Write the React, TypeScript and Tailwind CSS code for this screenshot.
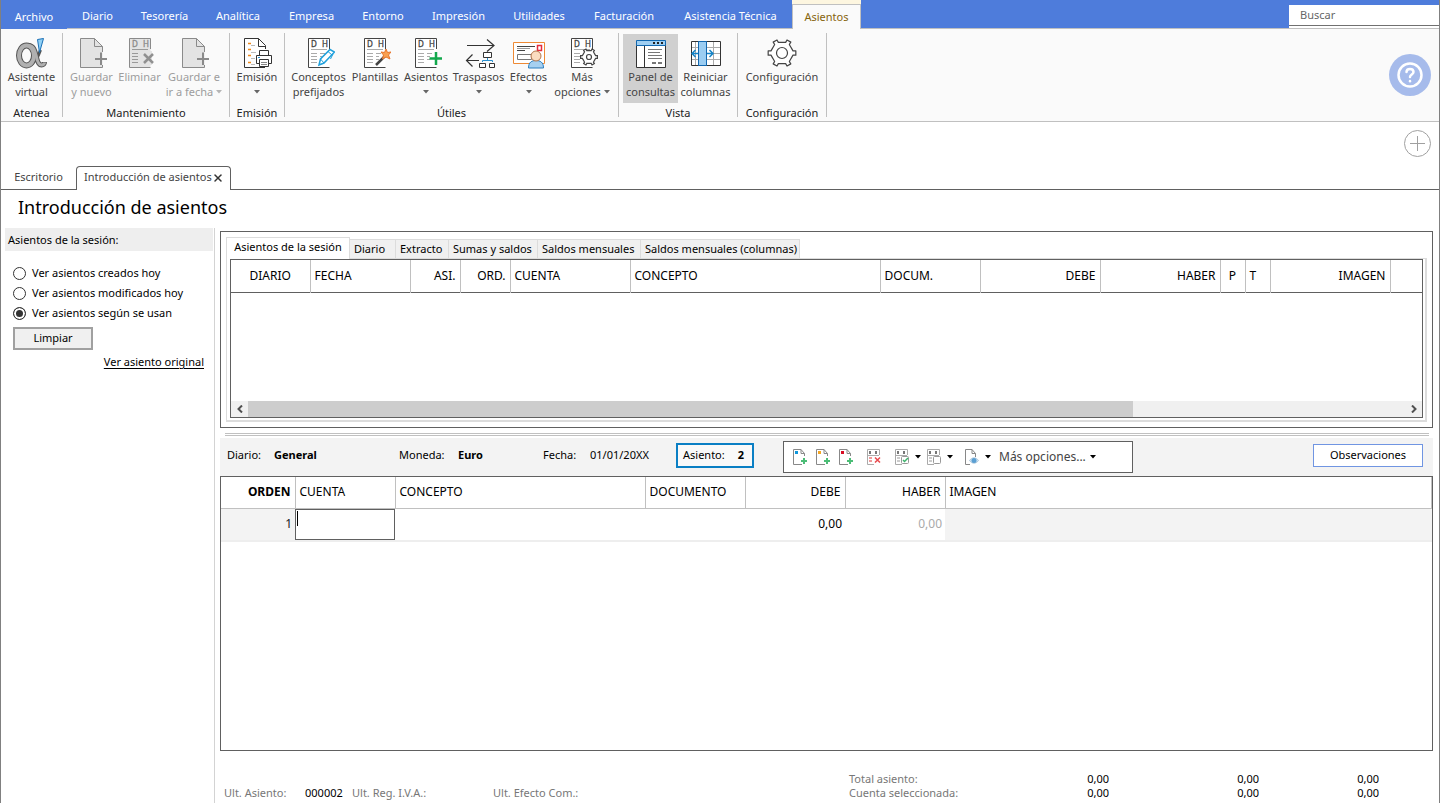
import React, { useState } from 'react';
import { X } from 'lucide-react';

const MENU = [
  { label: 'Diario', width: 'w-[61px]' },
  { label: 'Tesorería', width: 'w-[73px]' },
  { label: 'Analítica', width: 'w-[74px]' },
  { label: 'Empresa', width: 'w-[73px]' },
  { label: 'Entorno', width: 'w-[70px]' },
  { label: 'Impresión', width: 'w-[81px]' },
  { label: 'Utilidades', width: 'w-[80px]' },
  { label: 'Facturación', width: 'w-[90px]' },
  { label: 'Asistencia Técnica', width: 'w-[123px]' },
];

const QUERY_TABS = [
  { label: 'Diario', width: 'w-[46px]' },
  { label: 'Extracto', width: 'w-[53px]' },
  { label: 'Sumas y saldos', width: 'w-[89px]' },
  { label: 'Saldos mensuales', width: 'w-[103px]' },
  { label: 'Saldos mensuales (columnas)', width: 'w-[159px]' },
];

const SESSION_COLUMNS = [
  { label: 'DIARIO', className: 'w-[79px] text-center' },
  { label: 'FECHA', className: 'w-[100px] text-left' },
  { label: 'ASI.', className: 'w-[50px] text-right' },
  { label: 'ORD.', className: 'w-[50px] text-right' },
  { label: 'CUENTA', className: 'w-[120px] text-left' },
  { label: 'CONCEPTO', className: 'w-[250px] text-left' },
  { label: 'DOCUM.', className: 'w-[100px] text-left' },
  { label: 'DEBE', className: 'w-[120px] text-right' },
  { label: 'HABER', className: 'w-[120px] text-right' },
  { label: 'P', className: 'w-[25px] text-center' },
  { label: 'T', className: 'w-[25px] text-left' },
  { label: 'IMAGEN', className: 'w-[120px] text-right' },
  { label: '', className: '' },
];

const ENTRY_COLUMNS = [
  { label: 'ORDEN', className: 'w-[74px] text-right font-bold' },
  { label: 'CUENTA', className: 'w-[100px] text-left font-normal' },
  { label: 'CONCEPTO', className: 'w-[250px] text-left font-normal' },
  { label: 'DOCUMENTO', className: 'w-[100px] text-left font-normal' },
  { label: 'DEBE', className: 'w-[100px] text-right font-normal' },
  { label: 'HABER', className: 'w-[100px] text-right font-normal' },
  { label: 'IMAGEN', className: 'text-left font-normal' },
];

const SESSION_FILTERS = [
  'Ver asientos creados hoy',
  'Ver asientos modificados hoy',
  'Ver asientos según se usan',
];

type IconProps = { children: React.ReactNode };

const Icon: React.FC<IconProps> = ({ children }) => (
  <svg width="32" height="32" viewBox="0 0 32 32" fill="none" className="shrink-0" aria-hidden="true">
    {children}
  </svg>
);

const Caret: React.FC<{ className?: string }> = ({ className = 'text-[#666]' }) => (
  <svg width="6" height="4" viewBox="0 0 6 4" className={`inline-block shrink-0 ${className}`} aria-hidden="true">
    <path d="M0 0H6L3 3.5Z" fill="currentColor" />
  </svg>
);

// Six-toothed gear outline centred on cx, cy
const gearPoints = (cx: number, cy: number, r: number) => {
  const shape = [[-24, 0.76], [-11, 0.8], [-9, 1], [9, 1], [11, 0.8], [24, 0.76]];
  const points: string[] = [];
  for (let tooth = 0; tooth < 6; tooth++) {
    shape.forEach(([deg, k]) => {
      const a = ((tooth * 60 + deg) * Math.PI) / 180;
      points.push(`${(cx + r * k * Math.cos(a)).toFixed(2)},${(cy + r * k * Math.sin(a)).toFixed(2)}`);
    });
  }
  return points.join(' ');
};

// Atenea logo: a looped ribbon with a blue pen tip as its upper arm
const AteneaIcon = () => (
  <Icon>
    <ellipse cx="10.500" cy="18.500" rx="7.500" ry="10" stroke="#555" strokeWidth="6" />
    <path d="M13 8.500C18 9 19 14 20.500 20C21.500 25 23 28 25.500 28C27.500 28 28.500 26.500 28.500 25" stroke="#555" strokeWidth="5" />
    <path d="M24.500 13C22.500 19 19 25 14 28" stroke="#555" strokeWidth="3" />
    <ellipse cx="10.500" cy="18.500" rx="7.500" ry="10" stroke="#b0b0b0" strokeWidth="4" />
    <path d="M13 8.500C18 9 19 14 20.500 20C21.500 25 23 28 25.500 28C27.500 28 28.500 26.500 28.500 25.500" stroke="#b0b0b0" strokeWidth="3" />
    <path d="M21.500 2.500L27.500 1.500L23.500 15.500Z" fill="#8fd0f5" stroke="#1a6fb5" />
  </Icon>
);

const NewDocIcon = () => (
  <Icon>
    <path d="M4.500 1.500H18.500L26.500 9.500V30.500H4.500Z" fill="#e3e3e3" />
    <path d="M26.500 15V9.500L18.500 1.500H4.500V30.500H26.500V28M18.500 1.500V9.500H26.500" stroke="#8a8a8a" />
    <path d="M25 15.500V28M19 22H31" stroke="#8a8a8a" strokeWidth="2" />
  </Icon>
);

const LedgerBase: React.FC<{ muted?: boolean }> = ({ muted }) => {
  const ink = muted ? '#8a8a8a' : '#444';
  return (
    <>
      <path d="M5.500 1.500H26.500V30.500H5.500Z" fill={muted ? '#e3e3e3' : '#fff'} />
      <path d="M26.500 12V1.500H5.500V30.500H26.500" stroke={ink} />
      <text x="8" y="10" fontFamily="Noto Sans" fontSize="8" fill={ink} stroke={ink} strokeWidth="0.300">D</text>
      <text x="19" y="10" fontFamily="Noto Sans" fontSize="8" fill={ink} stroke={ink} strokeWidth="0.300">H</text>
      <path d="M8 12.500H24M8 16.500H14M8 19.500H14M8 22.500H14M8 25.500H14M17 16.500H22M17 19.500H20M17 22.500H20" stroke={muted ? '#999' : '#aaa'} />
    </>
  );
};

const DeleteIcon = () => (
  <Icon>
    <LedgerBase muted />
    <path d="M16 14H28V28H16Z" fill="#e3e3e3" />
    <path d="M20 17L29 26M29 17L20 26" stroke="#909090" strokeWidth="2.500" />
  </Icon>
);

const PrintIcon = () => (
  <Icon>
    <path d="M24.500 12V8.500L17.500 1.500H3.500V30.500H24" fill="#fff" stroke="#333" />
    <path d="M17.500 1.500V9.500H24.500" stroke="#333" />
    <path d="M7 6.500H10M7 12.500H10M7 18.500H10M7 25.500H10" stroke="#f08a1c" strokeWidth="1.500" />
    <path d="M10 8.500H14M10 15.500H15M10 21.500H14M10 27.500H14" stroke="#bbb" />
    <path d="M18.500 13.500H27.500V19H18.500Z" fill="#fff" stroke="#333" />
    <path d="M15.500 18.500H30.500V26.500H15.500Z" fill="#fff" stroke="#333" />
    <path d="M18.500 22.500H27.500V29.500H18.500Z" fill="#fff" stroke="#333" />
    <path d="M20 25.500H26M20 27.500H26" stroke="#888" />
    <path d="M17 20.500H19" stroke="#2790d0" />
  </Icon>
);

const PenIcon = () => (
  <Icon>
    <LedgerBase />
    <path d="M16 28L17.500 22L27 12.500L31.500 15L21 26Z" fill="#fff" stroke="#1fa0dc" strokeWidth="1.500" />
    <path d="M25 14.500L29 18M17.500 22L21 26M30 17L27.500 22" stroke="#1fa0dc" />
  </Icon>
);

const WandIcon = () => (
  <Icon>
    <LedgerBase />
    <path d="M17 28L26 19" stroke="#444" strokeWidth="2.500" />
    <path d="M27 12L28.500 15.500L32 15L29.500 18L31 22L27 20L23.500 22L24.500 18L22 15L25.500 15.500Z" fill="#f9a050" stroke="#e8762c" />
  </Icon>
);

const AddEntryIcon = () => (
  <Icon>
    <LedgerBase />
    <path d="M26 15V28M19.500 21.500H32" stroke="#12a84c" strokeWidth="2.500" />
  </Icon>
);

const TransferIcon = () => (
  <Icon>
    <path d="M4 8.500H31M24 2.500L31 8.500L24 14.500" stroke="#333" strokeWidth="1.200" />
    <path d="M3.500 23.500H16M9.500 17.500L3.500 23.500L9.500 29.500" stroke="#333" strokeWidth="1.200" />
    <path d="M20.500 15.500H28.500V20.500H20.500Z" fill="#fff" stroke="#333" />
    <path d="M24.500 21V23.500M19.500 25V23.500H29.500V25" stroke="#2790d0" />
    <path d="M16.500 26.500H22.500V30.500H16.500ZM26.500 26.500H31.500V30.500H26.500Z" fill="#fff" stroke="#333" />
  </Icon>
);

const EffectsIcon = () => (
  <Icon>
    <path d="M0.500 5.500H31.500V26.500H0.500Z" fill="#fff" stroke="#ee8a35" />
    <path d="M4 9.500H22M4 13.500H12" stroke="#444" />
    <path d="M4 11.500H17" stroke="#999" />
    <path d="M4.500 17.500H18.500V22.500H4.500Z" stroke="#777" />
    <path d="M24.500 8.500H28.500V13.500H24.500Z" stroke="#e52d3c" strokeWidth="1.500" />
    <path d="M15.500 31C15.500 25 19 23.500 23 23.500S30.500 25 30.500 31Z" fill="#a6d0f0" stroke="#2c7fc0" />
    <circle cx="23" cy="19" r="5" fill="#fadcc0" stroke="#b5754a" />
  </Icon>
);

const MoreIcon = () => (
  <Icon>
    <LedgerBase />
    <polygon points={gearPoints(23, 20, 8.5)} fill="#fff" stroke="#444" strokeWidth="1.200" />
    <circle cx="23" cy="20" r="2.500" fill="#fff" stroke="#444" strokeWidth="1.200" />
  </Icon>
);

const PanelIcon = () => (
  <Icon>
    <path d="M1.500 4.500H30.500V30.500H1.500Z" fill="#fff" stroke="#333" />
    <path d="M1.500 3.500H30.500V8.500H1.500Z" fill="#9fcff2" stroke="#1268b0" />
    <path d="M18 6H20M22 6H24M26 6H28" stroke="#222" strokeWidth="2" />
    <path d="M9.500 9V30" stroke="#333" />
    <path d="M13 12.500H27M13 15.500H25M13 18.500H27M13 21.500H27" stroke="#777" />
    <path d="M17 26H21M23 26H27" stroke="#777" strokeWidth="2" />
  </Icon>
);

const ColumnsIcon = () => (
  <Icon>
    <path d="M1.500 4.500H30.500V28.500H1.500Z" fill="#fff" />
    <path d="M2 10.500H30M2 16.500H30M2 22.500H30M5.500 5V28M23.500 5V28" stroke="#aaa" />
    <path d="M1.500 4.500H30.500V28.500H1.500Z" stroke="#333" />
    <path d="M8.500 4.500H16.500V28.500H8.500Z" fill="#9bcdf2" stroke="#1268b0" />
    <path d="M8 16.500H2.500M5.500 13L2 16.500L5.500 20M17 16.500H22.500M19.500 13L23 16.500L19.500 20" stroke="#1583c6" strokeWidth="1.500" />
  </Icon>
);

const GearIcon = () => (
  <Icon>
    <polygon points={gearPoints(16, 16, 14)} fill="#fff" stroke="#444" strokeWidth="1.200" strokeLinejoin="round" />
    <circle cx="16" cy="16" r="5.500" stroke="#444" strokeWidth="1.200" />
  </Icon>
);

type RibbonButtonProps = {
  icon: React.ReactNode;
  lines: string[];
  width: string;
  caret?: boolean;
  disabled?: boolean;
  pressed?: boolean;
};

const RibbonButton: React.FC<RibbonButtonProps> = ({ icon, lines, width, caret, disabled, pressed }) => (
  <button
    disabled={disabled}
    aria-pressed={pressed}
    className={`flex h-[69px] flex-col items-center whitespace-nowrap pt-[3px] leading-[15px] ${width} ${
      disabled ? 'text-[#9d9d9d]' : 'text-[#444]'
    } ${pressed ? 'bg-[#d0d0d0]' : ''}`}
  >
    {icon}
    <span>{lines[0]}</span>
    <span className="flex items-center gap-[3px]">
      {lines[1]}
      {caret && (
        <span className="flex h-[15px] items-center">
          <Caret className={disabled ? 'text-[#b5b5b5]' : 'text-[#666]'} />
        </span>
      )}
    </span>
  </button>
);

type RibbonGroupProps = { title: string; width: string; children: React.ReactNode };

const RibbonGroup: React.FC<RibbonGroupProps> = ({ title, width, children }) => (
  <section className={`my-1 flex h-[84px] shrink-0 flex-col border-r border-[#c0c0c0] ${width}`}>
    <div className="flex justify-center pt-px">{children}</div>
    <h2 className="pt-[2px] text-center leading-[15px] text-[#222]">{title}</h2>
  </section>
);

const Ribbon = () => (
  <div className="flex items-start border-b border-[#c0c0c0] bg-[#fafafa]">
    <RibbonGroup title="Atenea" width="w-[62px]">
      <RibbonButton icon={<AteneaIcon />} lines={['Asistente', 'virtual']} width="w-[58px]" />
    </RibbonGroup>
    <RibbonGroup title="Mantenimiento" width="w-[167px]">
      <RibbonButton icon={<NewDocIcon />} lines={['Guardar', 'y nuevo']} width="w-[52px]" disabled />
      <RibbonButton icon={<DeleteIcon />} lines={['Eliminar']} width="w-11" disabled />
      <RibbonButton icon={<NewDocIcon />} lines={['Guardar e', 'ir a fecha']} width="w-[65px]" caret disabled />
    </RibbonGroup>
    <RibbonGroup title="Emisión" width="w-[55px]">
      <RibbonButton icon={<PrintIcon />} lines={['Emisión']} width="w-[50px]" caret />
    </RibbonGroup>
    <RibbonGroup title="Útiles" width="w-[334px]">
      <RibbonButton icon={<PenIcon />} lines={['Conceptos', 'prefijados']} width="w-[59px]" />
      <RibbonButton icon={<WandIcon />} lines={['Plantillas']} width="w-[54px]" />
      <RibbonButton icon={<AddEntryIcon />} lines={['Asientos']} width="w-12" caret />
      <RibbonButton icon={<TransferIcon />} lines={['Traspasos']} width="w-[57px]" caret />
      <RibbonButton icon={<EffectsIcon />} lines={['Efectos']} width="w-[43px]" caret />
      <RibbonButton icon={<MoreIcon />} lines={['Más', 'opciones']} width="w-16" caret />
    </RibbonGroup>
    <RibbonGroup title="Vista" width="w-[119px]">
      <RibbonButton icon={<PanelIcon />} lines={['Panel de', 'consultas']} width="w-[55px]" pressed />
      <RibbonButton icon={<ColumnsIcon />} lines={['Reiniciar', 'columnas']} width="w-[55px]" />
    </RibbonGroup>
    <RibbonGroup title="Configuración" width="w-[89px]">
      <RibbonButton icon={<GearIcon />} lines={['Configuración']} width="w-20" />
    </RibbonGroup>
    <button aria-label="Ayuda" className="mr-2 ml-auto flex size-[42px] shrink-0 items-center justify-center self-center rounded-full bg-[#a6bbeb]">
      <svg width="26" height="26" viewBox="0 0 26 26" fill="none" stroke="#fff" strokeLinecap="round" aria-hidden="true">
        <circle cx="13" cy="13" r="11.500" strokeWidth="2.500" />
        <path d="M9.500 10C9.500 8 11 7 13 7S16.500 8 16.500 10C16.500 12.500 13 12.500 13 15" strokeWidth="2.500" />
        <path d="M13 19V19.200" strokeWidth="2.500" />
      </svg>
    </button>
  </div>
);

const MenuBar = () => (
  <header className="flex h-[29px] border-b border-[#c0c0c0] bg-[#4e7cdb] text-white">
    <nav className="flex items-end">
      <button className="-mb-px h-6 w-[66px] bg-[#4e7cdb]">Archivo</button>
      {MENU.map((item) => (
        <button key={item.label} className={`h-[23px] whitespace-nowrap ${item.width}`}>
          {item.label}
        </button>
      ))}
      <div className="-mb-px flex h-[29px] w-[69px] flex-col bg-[#fdf6e0] pt-1">
        <button className="flex-1 border-x border-t border-[#c0c0c0] bg-[#fafafa] text-[#86640c]" aria-current="page">
          Asientos
        </button>
      </div>
    </nav>
    <div className="mt-[5px] ml-auto bg-white pb-[2px]">
      <input
        type="search"
        aria-label="Buscar"
        placeholder="Buscar"
        className="block h-[21px] w-[150px] border-b border-[#707070] bg-white px-[11px] pb-[2px] text-black outline-none placeholder:text-[#666]"
      />
    </div>
  </header>
);

const DocumentTabs = () => (
  <div className="flex h-[68px] flex-col justify-between">
    <button aria-label="Nueva pestaña" className="mt-2 mr-2 self-end">
      <svg width="27" height="27" viewBox="0 0 27 27" fill="none" stroke="#a0a0a0" aria-hidden="true">
        <circle cx="13.500" cy="13.500" r="13" />
        <path d="M13.500 6V21M6 13.500H21" />
      </svg>
    </button>
    <div className="flex items-end text-[#444]">
      <button className="h-6 w-[75px] border-b border-[#606060]">Escritorio</button>
      <div className="flex h-6 w-[155px] items-center justify-between rounded-t border-x border-t border-[#606060] pr-2 pb-[2px] pl-[7px]">
        <button className="whitespace-nowrap">Introducción de asientos</button>
        <button aria-label="Cerrar">
          <X size={12} strokeWidth={3} className="text-[#333]" />
        </button>
      </div>
      <div className="h-6 flex-1 border-b border-[#606060]" />
    </div>
  </div>
);

const SessionPanel = () => {
  const [filter, setFilter] = useState(SESSION_FILTERS[2]);

  return (
    <aside className="w-[214px] shrink-0 border-r border-[#d3d3d3]">
      <h2 className="mr-px ml-1 bg-[#eee] px-[3px] leading-[23px]">Asientos de la sesión:</h2>
      <div className="mt-3 ml-3">
        {SESSION_FILTERS.map((option) => (
          <label key={option} className="flex h-5 items-center gap-[6px]">
            <input
              type="radio"
              name="session-filter"
              checked={filter === option}
              onChange={() => setFilter(option)}
              className="size-[13px] appearance-none rounded-full border border-[#333] bg-white checked:bg-[#333] checked:shadow-[inset_0_0_0_2px_#fff]"
            />
            {option}
          </label>
        ))}
        <button className="mt-1 block h-[23px] w-20 border-2 border-[#a0a0a0] bg-[#f0f0f0]">Limpiar</button>
      </div>
      <div className="mt-1 mr-[10px] text-right leading-4">
        <a href="#original" className="underline underline-offset-2">Ver asiento original</a>
      </div>
    </aside>
  );
};

const QueryPanel = () => (
  <section className="h-[197px] border border-[#606060] p-[5px]">
    <div className="flex items-end">
      <button className="z-10 -mb-px h-[22px] w-[124px] border-x border-t border-[#dcdcdc] bg-white pb-[2px] whitespace-nowrap">
        Asientos de la sesión
      </button>
      {QUERY_TABS.map((tab) => (
        <button
          key={tab.label}
          className={`h-[19px] border-t border-r border-[#dcdcdc] bg-[#f0f0f0] pl-1 text-left whitespace-nowrap ${tab.width}`}
        >
          {tab.label}
        </button>
      ))}
    </div>
    <div className="border border-r-2 border-b-2 border-[#dcdcdc] pr-[2px] pb-[2px] pl-[3px]">
      <div className="flex h-[159px] flex-col justify-between border border-[#606060]">
        <div className="overflow-hidden">
          <table className="w-full table-fixed border-collapse text-[12px]">
            <thead>
              <tr className="h-8 border-b border-[#606060]">
                {SESSION_COLUMNS.map((col, i) => (
                  <th key={i} className={`border-r border-r-[#c0c0c0] px-1 font-normal last:border-r-0 ${col.className}`}>
                    {col.label}
                  </th>
                ))}
              </tr>
            </thead>
          </table>
        </div>
        <div className="flex h-4 items-center bg-[#f0f0f0]">
          <button aria-label="Desplazar a la izquierda" className="flex h-full w-[17px] items-center justify-center">
            <svg width="6" height="8" viewBox="0 0 6 8" fill="none" stroke="#505050" strokeWidth="2" aria-hidden="true">
              <path d="M5 0.500L1.500 4L5 7.500" />
            </svg>
          </button>
          <div className="flex h-full flex-1">
            <div className="h-full grow-[13] bg-[#cdcdcd]" />
            <div className="h-full grow-[4]" />
          </div>
          <button aria-label="Desplazar a la derecha" className="flex h-full w-[17px] items-center justify-center">
            <svg width="6" height="8" viewBox="0 0 6 8" fill="none" stroke="#505050" strokeWidth="2" aria-hidden="true">
              <path d="M1 0.500L4.500 4L1 7.500" />
            </svg>
          </button>
        </div>
      </div>
    </div>
  </section>
);

const SmallIcon: React.FC<IconProps> = ({ children }) => (
  <svg width="16" height="16" viewBox="0 0 16 16" fill="none" aria-hidden="true">
    {children}
  </svg>
);

const NewEntryIcon: React.FC<{ color: string }> = ({ color }) => (
  <SmallIcon>
    <path d="M11.500 7V4.500L8 0.500H0.500V15.500H9M8 0.500V4.500H11.500" stroke="#888" />
    <rect x="2" y="2" width="3" height="3" fill={color} />
    <path d="M11 9V15M8 12H14" stroke="#4bbd76" strokeWidth="2" />
  </SmallIcon>
);

const SmallLedger: React.FC<{ dots: string }> = ({ dots }) => (
  <>
    <path d="M12.500 6V0.500H0.500V15.500H7M1 6.500H12" stroke="#aaa" />
    <path d="M3 2V5M9 2V5" stroke="#777" strokeWidth="2" />
    <path d="M2 9H5M2 12H5" stroke={dots} strokeWidth="2" />
  </>
);

const EntryToolbar = () => (
  <div className="flex h-8 w-[350px] shrink-0 items-center border border-[#606060] bg-white pl-[9px]">
    <div className="flex gap-[7px]">
      <button aria-label="Nuevo asiento"><NewEntryIcon color="#0e97dc" /></button>
      <button aria-label="Nueva plantilla"><NewEntryIcon color="#f5a623" /></button>
      <button aria-label="Nuevo registro"><NewEntryIcon color="#d80c24" /></button>
    </div>
    <button aria-label="Borrar apunte" className="ml-3">
      <SmallIcon>
        <SmallLedger dots="#f09a9a" />
        <path d="M8 8.500L13 13.500M13 8.500L8 13.500" stroke="#e8484c" strokeWidth="1.500" />
      </SmallIcon>
    </button>
    <button aria-label="Puntear" className="ml-3 flex items-center gap-1">
      <SmallIcon>
        <SmallLedger dots="#ccc" />
        <rect x="6.500" y="7.500" width="7" height="7" rx="1" fill="#fff" stroke="#999" />
        <path d="M8 11L9.500 12.500L13 9" stroke="#3db36c" strokeWidth="1.500" />
      </SmallIcon>
      <Caret className="text-black" />
    </button>
    <button aria-label="Despuntear" className="ml-[6px] flex items-center gap-1">
      <SmallIcon>
        <SmallLedger dots="#ccc" />
        <rect x="6.500" y="7.500" width="7" height="7" rx="1" fill="#fff" stroke="#999" />
      </SmallIcon>
      <Caret className="text-black" />
    </button>
    <button aria-label="Ver documento" className="ml-3 flex items-center gap-1">
      <SmallIcon>
        <path d="M10.500 8V4.500L7 0.500H0.500V15.500H5M7 0.500V4.500H10.500" stroke="#888" />
        <path d="M4.500 11.500C7 8 11 8 13.500 11.500C11 15 7 15 4.500 11.500Z" fill="#cfe3f3" stroke="#a9c4da" />
        <circle cx="9" cy="11.500" r="2.500" fill="#5b9fd2" />
      </SmallIcon>
      <Caret className="text-black" />
    </button>
    <button className="ml-2 flex items-center gap-1 text-[12px] text-[#444]">
      Más opciones...
      <Caret className="text-black" />
    </button>
  </div>
);

const EntryHeader = () => (
  <div className="flex h-[38px] items-start bg-[#f3f3f3] pr-[10px] pl-[7px] whitespace-nowrap">
    <dl className="mt-[5px] flex items-center">
      <dt className="w-[47px]">Diario:</dt>
      <dd className="w-[125px] font-bold">General</dd>
      <dt className="w-[59px]">Moneda:</dt>
      <dd className="w-[85px] font-bold">Euro</dd>
      <dt className="w-[47px]">Fecha:</dt>
      <dd className="w-[86px]">01/01/20XX</dd>
      <div className="flex h-[25px] w-[78px] items-center justify-between border-2 border-[#0a7fc4] bg-[#f9f9f9] pr-2 pl-[5px]">
        <dt>Asiento:</dt>
        <dd className="font-bold">2</dd>
      </div>
    </dl>
    <div className="mt-[3px] ml-[29px]">
      <EntryToolbar />
    </div>
    <button className="mt-[6px] ml-auto h-[23px] w-[110px] border border-[#7095e2] bg-white">Observaciones</button>
  </div>
);

const EntryTable = () => (
  <div className="flex-1 border border-[#606060]">
    <table className="w-full table-fixed border-collapse text-[12px]">
      <thead>
        <tr className="h-[31px]">
          {ENTRY_COLUMNS.map((col) => (
            <th key={col.label} className={`border-r border-b border-[#c0c0c0] px-1 ${col.className}`}>
              {col.label}
            </th>
          ))}
        </tr>
      </thead>
      <tbody>
        <tr className="h-[33px] border-b-2 border-[#eee]">
          <td className="bg-[#f3f3f3] px-[3px] text-right text-[#222]">1</td>
          <td className="p-0">
            <div className="relative">
              <input aria-label="Cuenta" className="block h-[31px] w-full border border-[#606060] px-1 outline-none" />
              <span className="absolute top-[2px] left-[2px] h-[15px] w-px bg-black" />
            </div>
          </td>
          <td />
          <td />
          <td className="px-[3px] text-right">0,00</td>
          <td className="px-[3px] text-right text-[#aaa]">0,00</td>
          <td className="bg-[#f3f3f3]" />
        </tr>
      </tbody>
    </table>
  </div>
);

const Totals = () => (
  <footer className="flex h-[52px] items-end pb-[3px] leading-[14px] whitespace-nowrap text-[#777]">
    <dl className="flex pl-1">
      <dt className="w-[81px]">Ult. Asiento:</dt>
      <dd className="w-[47px] text-black">000002</dd>
      <dt className="w-[141px]">Ult. Reg. I.V.A.:</dt>
      <dt>Ult. Efecto Com.:</dt>
    </dl>
    <table className="mr-[54px] ml-auto table-fixed">
      <tbody>
        {['Total asiento:', 'Cuenta seleccionada:'].map((label) => (
          <tr key={label}>
            <th className="w-[110px] p-0 text-left font-normal">{label}</th>
            <td className="w-[150px] p-0 text-right text-black">0,00</td>
            <td className="w-[150px] p-0 text-right text-black">0,00</td>
            <td className="w-[120px] p-0 text-right text-black">0,00</td>
          </tr>
        ))}
      </tbody>
    </table>
  </footer>
);

const App: React.FC = () => {
  return (
    <div className="flex min-h-screen flex-col border-x border-[#808080] bg-white font-['Noto_Sans',sans-serif] text-[11px] text-black">
      <MenuBar />
      <Ribbon />
      <DocumentTabs />
      <h1 className="h-[38px] pl-[17px] text-[18px] leading-[34px]">Introducción de asientos</h1>
      <div className="flex flex-1">
        <SessionPanel />
        <main className="flex min-w-0 flex-1 flex-col pt-[3px] pr-[6px] pl-[5px]">
          <QueryPanel />
          <div className="mt-[5px] mr-1 mb-[2px] ml-[5px] h-[3px] border-y border-[#c0c0c0]" />
          <EntryHeader />
          <EntryTable />
          <Totals />
        </main>
      </div>
    </div>
  );
};

export default App;
